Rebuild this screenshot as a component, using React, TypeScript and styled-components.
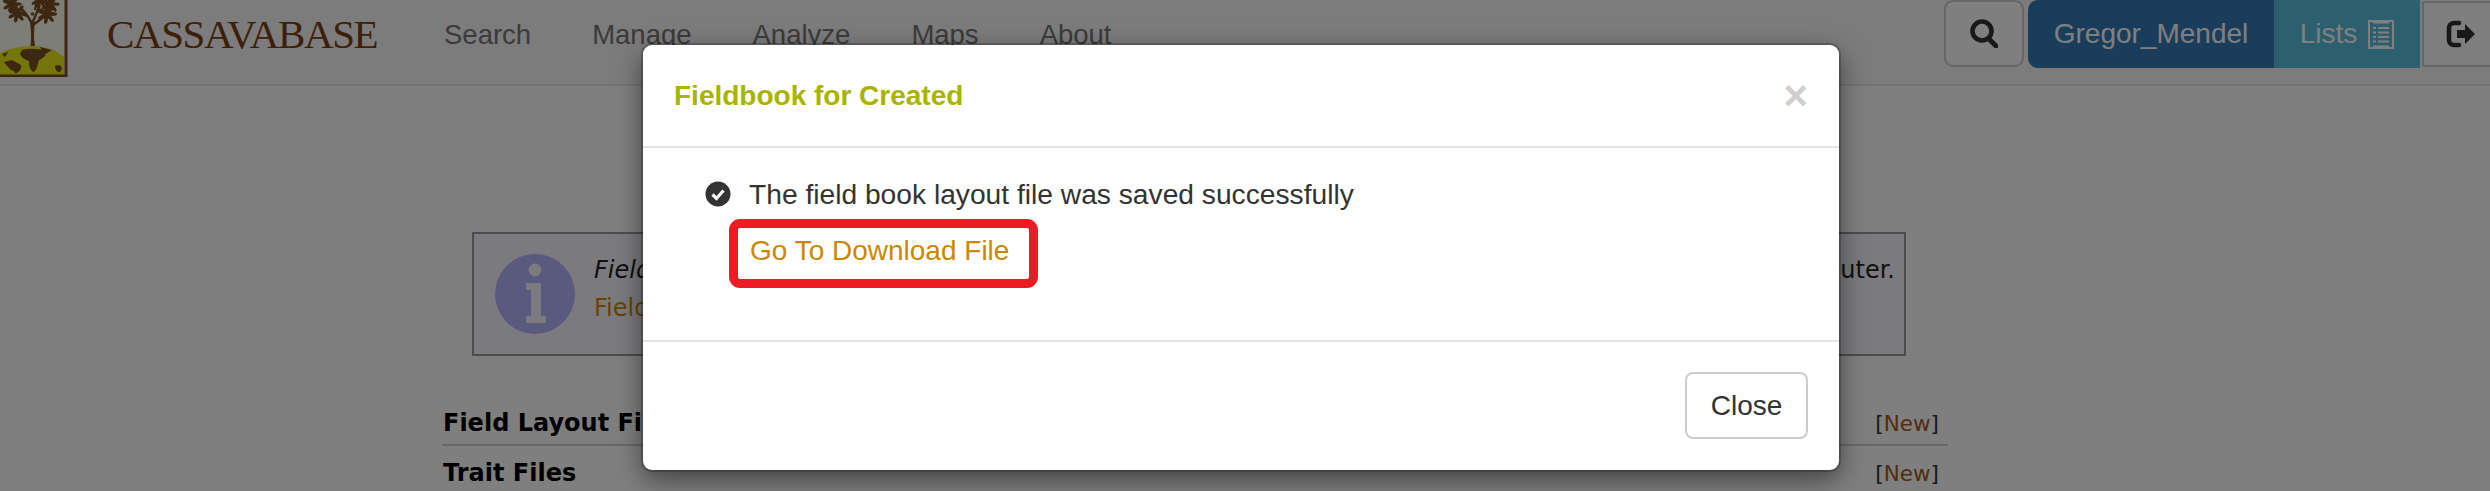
import React from "react";
import styled, { createGlobalStyle } from "styled-components";

const Global = createGlobalStyle`
  html, body { margin: 0; padding: 0; background: #fff; }
  body { width: 2490px; height: 491px; overflow: hidden; font-family: "Liberation Sans", Arial, sans-serif; }
`;
const Page = styled.div`position: relative; width: 2490px; height: 491px; overflow: hidden; background: #fff;`;
const Navbar = styled.header`
  display: flex; align-items: flex-start; height: 84px; background: #f8f8f8; border-bottom: 2px solid #e7e7e7;
`;
const LogoBox = styled.div`width: 68px; height: 77px; flex: none; svg { display: block; }`;
const Brand = styled.div`
  font-family: "Liberation Serif", serif; font-size: 41px; line-height: 46px; color: #7a4012;
  margin: 11px 0 0 39px; width: 337px; flex: none; letter-spacing: -1.4px;
`;
const NavMenu = styled.nav`display: flex; gap: 61px; margin-top: 20px; flex: none;`;
const NavItem = styled.span`font-size: 27.5px; line-height: 30px; color: #777;`;
const NavRight = styled.div`display: flex; margin-left: auto; align-items: flex-start;`;
const SearchBtn = styled.div`
  width: 80px; height: 67px; box-sizing: border-box; margin: 0 4px 0 0; border: 2px solid #ccc; border-radius: 9px;
  display: flex; align-items: center; justify-content: center; background: #fff;
`;
const UserBtn = styled.div`
  width: 246px; height: 68px; background: #337ab7; color: #fff; font-size: 28px; display: flex; align-items: center;
  justify-content: center; border-radius: 10px 0 0 10px;
`;
const ListsBtn = styled.div`
  width: 146px; height: 68px; background: #5bc0de; color: #fff; font-size: 28px; display: flex; align-items: center;
  justify-content: center; gap: 11px;
`;
const LogoutBtn = styled.div`
  width: 68px; height: 66px; margin: 1px 0 0 2px; box-sizing: border-box; border: 2px solid #ccc; border-right: none;
  background: #fff; display: flex; align-items: center; padding-left: 22px;
`;
const Content = styled.main`
  padding: 146px 542px 0 442px; font-family: "DejaVu Sans", Verdana, sans-serif;
`;
const InfoBox = styled.section`
  margin: 0 42px 0 30px; height: 124px; box-sizing: border-box; border: 2.5px solid #999; background: #f6f6ff;
  display: flex; align-items: center; padding: 0 9px 0 21px; gap: 19px;
`;
const InfoLines = styled.div`flex: 1; display: flex; flex-direction: column; gap: 11px; margin-top: -10px; font-size: 24px; line-height: 27px; color: #222;`;
const InfoRow = styled.div`display: flex; justify-content: space-between;`;
const InfoLink = styled.span`color: #cc8800;`;
const FileList = styled.div`margin-top: 40px;`;
const FileRow = styled.div<{ $line?: boolean }>`
  display: flex; justify-content: space-between; align-items: baseline; height: ${(p) => (p.$line ? "50px" : "46px")}; box-sizing: border-box;
  padding: 12px 9px 0 1px; border-bottom: ${(p) => (p.$line ? "2px solid #d0d0d0" : "none")};
  font-size: 24px; line-height: 30px;
`;
const FileName = styled.b`color: #000;`;
const NewTag = styled.span`font-size: 21.5px; color: #333; em { font-style: normal; color: #a85a14; }`;
const Overlay = styled.div`position: absolute; inset: 0; background: rgba(0, 0, 0, 0.5);`;
const Modal = styled.div`
  position: absolute; left: 643px; top: 45px; width: 1196px; height: 425px; background: #fff; border-radius: 9px;
  box-shadow: 0 9px 27px rgba(0, 0, 0, 0.5), 0 0 0 2px rgba(0, 0, 0, 0.2);
  display: flex; flex-direction: column;
`;
const ModalHeader = styled.div`
  height: 103px; box-sizing: border-box; border-bottom: 2px solid #e5e5e5; display: flex; justify-content: space-between;
  align-items: center; padding: 0 31px 0 31px;
`;
const Title = styled.h4`margin: 0; font-size: 28px; line-height: 32px; font-weight: 700; color: #a8b400;`;
const CloseX = styled.span`
  font-size: 42px; line-height: 42px; font-weight: 700; color: #cfcfcf;
`;
const ModalBody = styled.div`height: 194px; box-sizing: border-box; padding: 28px 0 0 62px; border-bottom: 2px solid #e5e5e5;`;
const Msg = styled.div`display: flex; align-items: center; gap: 18px; font-size: 28.2px; line-height: 36px; color: #333;`;
const LinkBox = styled.div`
  margin: 7px 0 0 24px; box-sizing: border-box; width: 309px; height: 69px; border: 9px solid #ed1c24;
  border-radius: 11px; padding: 0 0 0 12px; font-size: 28px; line-height: 45px; color: #cc8800; white-space: nowrap;
`;
const ModalFooter = styled.div`flex: 1; display: flex; justify-content: flex-end; align-items: flex-start; padding: 30px 31px 0 0;`;
const CloseBtn = styled.div`
  width: 123px; height: 67px; box-sizing: border-box; border: 2px solid #ccc; border-radius: 8px; font-size: 28px; color: #333;
  display: flex; align-items: center; justify-content: center;
`;

const Leaf = ({ x, y, s = 1 }: { x: number; y: number; s?: number }) => (
  <g transform={`translate(${x} ${y}) scale(${s})`} fill="#7a4e22">
    {[-150, -100, -50, 0, 50, 100, 150, 200].map((a) => (
      <ellipse key={a} cx="4.2" cy="0" rx="4.2" ry="1.6" transform={`rotate(${a})`} />
    ))}
  </g>
);
const Logo = () => (
  <svg width="68" height="77" viewBox="0 0 68 77">
    <rect x="-3" y="-3" width="69" height="78" fill="#fbfcf0" />
    <path d="M0 53 Q14 46 32 46 Q52 46 64 57 V75 H0 Z" fill="#e8ec18" />
    <path d="M-2 46V76H66V-3" fill="none" stroke="#7a4e22" strokeWidth="3" />
    <path d="M22 50 q11 -3 24 1 l-1 5 q-3 3 -6 4 l-2 7 q-2 5 -4 5 q-4 -3 -4 -11 q-7 -2 -9 -7z M40 47 l12 3 -8 5z M4 62 l8 -2 9 5 q1 5 -3 7 q-3 3 -4 -1 q-4 -1 -6 -4z M2 54 l6 -2 -3 5z M55 66 q5 -3 7 2 q-1 5 -4 4 q-3 -2 -3 -6z" fill="#7a4e22" />
    <path d="M32.5 46 L32 24 Q28 15 20 7 M32 24 Q36 14 40 5 M33 25 Q40 20 47 14 M28 16 L18 13 M35 10 L37 1" stroke="#7a4e22" strokeWidth="2.4" fill="none" />
    <path d="M30.5 46 Q32 35 30 22 L35 22 Q33 35 35 46z" fill="#7a4e22" />
    <circle cx="32.5" cy="14" r="1.7" fill="#7a4e22" />
    <Leaf x={12} y={4} s={1.15} />
    <Leaf x={17} y={13} s={1.15} />
    <Leaf x={39} y={0} s={1} />
    <Leaf x={50} y={4} s={1.15} />
    <Leaf x={47} y={14} s={1.2} />
  </svg>
);
const SearchIcon = () => (
  <svg width="28" height="29" viewBox="0 0 28 29"><circle cx="12" cy="12" r="9.5" fill="none" stroke="#333" strokeWidth="4.6" /><path d="M19 20 L26 27" stroke="#333" strokeWidth="5" strokeLinecap="round" /></svg>
);
const ListIcon = () => (
  <svg width="26" height="29" viewBox="0 0 26 29" fill="none"><rect x="1" y="1" width="24" height="27" stroke="#fff" strokeWidth="2" /><path d="M5 2.5h16M5 26.5h16" stroke="#fff" strokeWidth="2" /><path d="M5 8h3M10 8h11M5 12.5h3M10 12.5h11M5 17h3M10 17h11M5 21.5h3M10 21.5h11" stroke="#fff" strokeWidth="2" /></svg>
);
const LogoutIcon = () => (
  <svg width="30" height="28" viewBox="0 0 30 28"><path d="M13 3H8a5 5 0 0 0-5 5v12a5 5 0 0 0 5 5h5" fill="none" stroke="#333" strokeWidth="4.6" strokeLinecap="round" /><path d="M11 10h8V4l10 10-10 10v-6h-8z" fill="#333" /></svg>
);
const CheckIcon = () => (
  <svg width="26" height="26" viewBox="0 0 26 26"><circle cx="13" cy="13" r="12.5" fill="#333" /><path d="M7.5 13.5l4 4 7-8" fill="none" stroke="#fff" strokeWidth="3.2" /></svg>
);
const InfoIcon = () => (
  <svg width="80" height="80" viewBox="0 0 80 80" style={{ flex: "none" }}><circle cx="40" cy="40" r="40" fill="#b4b4ff" /><circle cx="40" cy="16" r="6.5" fill="#f6f6ff" /><path d="M31 29h15v33h5v7H31v-7h5V36h-5z" fill="#f6f6ff" /></svg>
);

export default function App() {
  return (
    <Page>
      <Global />
      <Navbar>
        <LogoBox><Logo /></LogoBox>
        <Brand>CASSAVABASE</Brand>
        <NavMenu>
          <NavItem>Search</NavItem>
          <NavItem>Manage</NavItem>
          <NavItem>Analyze</NavItem>
          <NavItem>Maps</NavItem>
          <NavItem>About</NavItem>
        </NavMenu>
        <NavRight>
          <SearchBtn><SearchIcon /></SearchBtn>
          <UserBtn>Gregor_Mendel</UserBtn>
          <ListsBtn>Lists <ListIcon /></ListsBtn>
          <LogoutBtn><LogoutIcon /></LogoutBtn>
        </NavRight>
      </Navbar>
      <Content>
        <InfoBox>
          <InfoIcon />
          <InfoLines>
            <InfoRow><i>Field books can be downloaded and used on a tablet</i><span>computer.</span></InfoRow>
            <InfoRow><InfoLink>Field Book App</InfoLink></InfoRow>
          </InfoLines>
        </InfoBox>
        <FileList>
          <FileRow $line><FileName>Field Layout Files</FileName><NewTag>[<em>New</em>]</NewTag></FileRow>
          <FileRow><FileName>Trait Files</FileName><NewTag>[<em>New</em>]</NewTag></FileRow>
        </FileList>
      </Content>
      <Overlay />
      <Modal>
        <ModalHeader>
          <Title>Fieldbook for Created</Title>
          <CloseX>×</CloseX>
        </ModalHeader>
        <ModalBody>
          <Msg><CheckIcon /><span>The field book layout file was saved successfully</span></Msg>
          <LinkBox>Go To Download File</LinkBox>
        </ModalBody>
        <ModalFooter><CloseBtn>Close</CloseBtn></ModalFooter>
      </Modal>
    </Page>
  );
}
